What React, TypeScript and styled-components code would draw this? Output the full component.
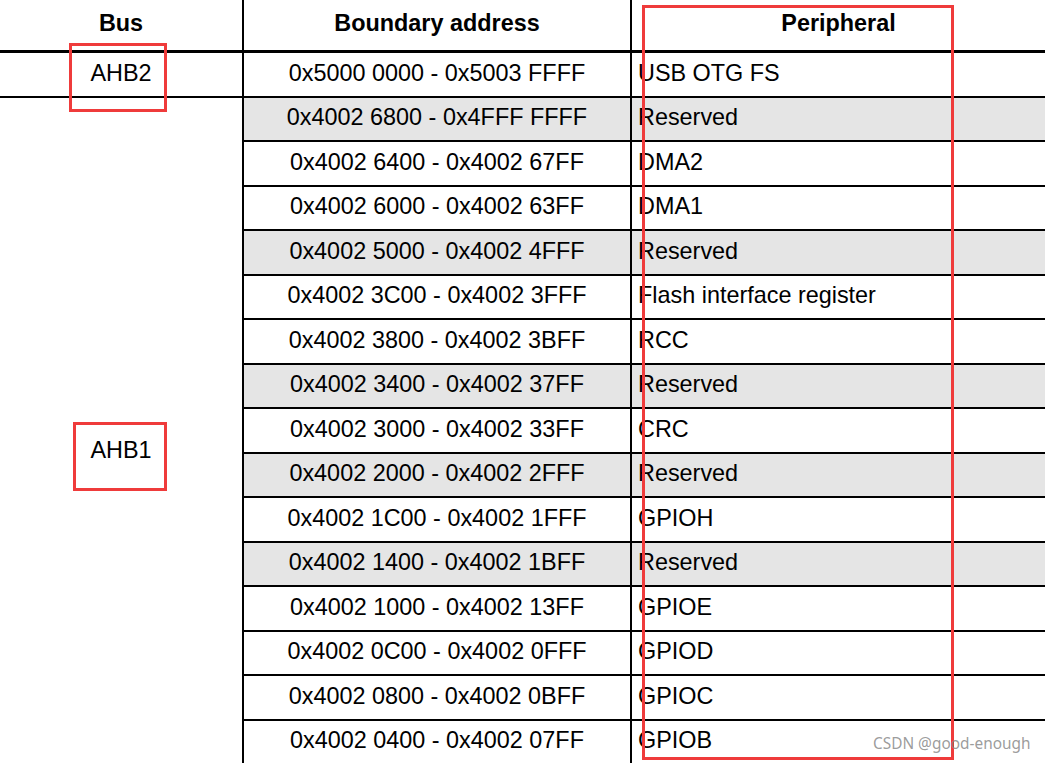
import {Fragment} from 'react';
import styled, {createGlobalStyle} from 'styled-components';

interface Row {
	range: string;
	peripheral: string;
	reserved?: boolean;
}

const ahb1Rows: Row[] = [
	{range: '0x4002 6800 - 0x4FFF FFFF', peripheral: 'Reserved', reserved: true},
	{range: '0x4002 6400 - 0x4002 67FF', peripheral: 'DMA2'},
	{range: '0x4002 6000 - 0x4002 63FF', peripheral: 'DMA1'},
	{range: '0x4002 5000 - 0x4002 4FFF', peripheral: 'Reserved', reserved: true},
	{range: '0x4002 3C00 - 0x4002 3FFF', peripheral: 'Flash interface register'},
	{range: '0x4002 3800 - 0x4002 3BFF', peripheral: 'RCC'},
	{range: '0x4002 3400 - 0x4002 37FF', peripheral: 'Reserved', reserved: true},
	{range: '0x4002 3000 - 0x4002 33FF', peripheral: 'CRC'},
	{range: '0x4002 2000 - 0x4002 2FFF', peripheral: 'Reserved', reserved: true},
	{range: '0x4002 1C00 - 0x4002 1FFF', peripheral: 'GPIOH'},
	{range: '0x4002 1400 - 0x4002 1BFF', peripheral: 'Reserved', reserved: true},
	{range: '0x4002 1000 - 0x4002 13FF', peripheral: 'GPIOE'},
	{range: '0x4002 0C00 - 0x4002 0FFF', peripheral: 'GPIOD'},
	{range: '0x4002 0800 - 0x4002 0BFF', peripheral: 'GPIOC'},
	{range: '0x4002 0400 - 0x4002 07FF', peripheral: 'GPIOB'},
];

const App = () => {
	return (
		<>
			<GlobalStyle />
			<Page>
				<MapTable>
					<HeadCell>Bus</HeadCell>
					<HeadCell $divider>Boundary address</HeadCell>
					<HeadCell $divider>Peripheral</HeadCell>

					<BusCell $ruled>AHB2</BusCell>
					<AddrCell>0x5000 0000 - 0x5003 FFFF</AddrCell>
					<PeriphCell>USB OTG FS</PeriphCell>

					{/* the AHB1 block continues below the visible crop (GPIOA) */}
					<BusCell $span={ahb1Rows.length} $lift={20}>
						AHB1
					</BusCell>
					{ahb1Rows.map((row) => (
						<Fragment key={row.range}>
							<AddrCell $shaded={row.reserved}>{row.range}</AddrCell>
							<PeriphCell $shaded={row.reserved}>{row.peripheral}</PeriphCell>
						</Fragment>
					))}
				</MapTable>

				{/* red annotation boxes drawn over the scan */}
				<Mark $x={69} $y={43} $w={98} $h={69} />
				<Mark $x={73} $y={422} $w={94} $h={69} />
				<Mark $x={642} $y={5} $w={312} $h={755} />
				<Watermark>CSDN @good-enough</Watermark>
			</Page>
		</>
	);
};

const GlobalStyle = createGlobalStyle`
	html, body {
		margin: 0;
		padding: 0;
		background: #fff;
		overflow: hidden;
	}
	body {
		font-family: "Liberation Sans", Arial, sans-serif;
		color: #000;
	}
`;

const Page = styled.div`
	position: relative;
	width: 1045px;
	height: 763px;
	overflow: hidden;
`;

const MapTable = styled.div`
	display: grid;
	grid-template-columns: 242px 388px 415px;
	grid-template-rows: 53px;
	grid-auto-rows: 44.53px;
	font-size: 23.4px;
`;

const HeadCell = styled.div<{$divider?: boolean}>`
	display: flex;
	align-items: center;
	justify-content: center;
	box-sizing: border-box;
	padding-bottom: 4px;
	font-weight: 700;
	border-bottom: 3px solid #000;
	border-left: ${(p) => (p.$divider ? '2px solid #000' : 'none')};
`;

const BusCell = styled.div<{$ruled?: boolean; $span?: number; $lift?: number}>`
	display: flex;
	align-items: center;
	justify-content: center;
	box-sizing: border-box;
	grid-column: 1;
	grid-row: ${(p) => (p.$span ? `span ${p.$span}` : 'auto')};
	border-bottom: ${(p) => (p.$ruled ? '2px solid #000' : 'none')};
	padding-bottom: 2px;
	padding-top: ${(p) => (p.$lift ? `${p.$lift * 2}px` : '0')};
`;

const AddrCell = styled.div<{$shaded?: boolean}>`
	display: flex;
	align-items: center;
	justify-content: center;
	box-sizing: border-box;
	padding-bottom: 2px;
	background: ${(p) => (p.$shaded ? '#e5e5e5' : '#fff')};
	border-left: 2px solid #000;
	border-bottom: 2px solid #000;
`;

const PeriphCell = styled(AddrCell)`
	justify-content: flex-start;
	padding-left: 6px;
`;

const Mark = styled.div<{$x: number; $y: number; $w: number; $h: number}>`
	position: absolute;
	left: ${(p) => p.$x}px;
	top: ${(p) => p.$y}px;
	width: ${(p) => p.$w}px;
	height: ${(p) => p.$h}px;
	box-sizing: border-box;
	border: 3px solid #ef3b3b;
	pointer-events: none;
`;

const Watermark = styled.div`
	position: absolute;
	left: 873px;
	top: 733px;
	font-family: "Noto Sans", "Liberation Sans", sans-serif;
	font-size: 15.4px;
	color: rgba(130, 130, 130, 0.8);
	white-space: nowrap;
`;

export default App;
